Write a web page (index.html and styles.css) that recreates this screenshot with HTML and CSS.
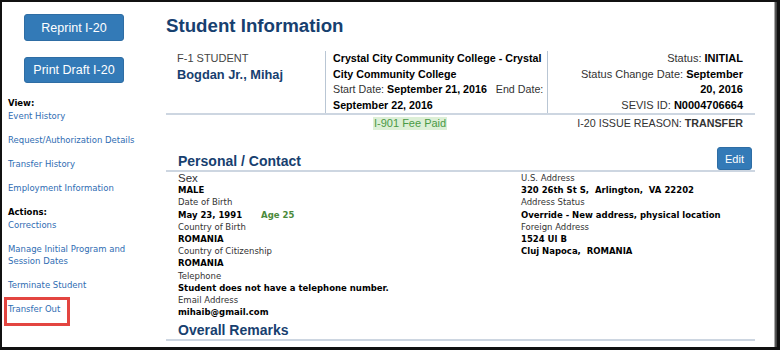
FILE: index.html
```html
<!DOCTYPE html>
<html>
<head>
<meta charset="utf-8">
<link rel="stylesheet" href="styles.css">
</head>
<body>
<div class="frame">
  <aside class="sidebar">
    <button class="btn btn-side">Reprint I-20</button>
    <button class="btn btn-side">Print Draft I-20</button>
    <div class="side-label">View:</div>
    <a class="side-link">Event History</a>
    <a class="side-link">Request/Authorization Details</a>
    <a class="side-link">Transfer History</a>
    <a class="side-link">Employment Information</a>
    <div class="side-label">Actions:</div>
    <a class="side-link">Corrections</a>
    <a class="side-link">Manage Initial Program and<br>Session Dates</a>
    <a class="side-link">Terminate Student</a>
    <a class="side-link highlighted">Transfer Out</a>
  </aside>
  <main class="main">
    <h1 class="title">Student Information</h1>
    <div class="info">
      <div class="info-col col-a">
        <div class="type">F-1 STUDENT</div>
        <div class="name">Bogdan Jr., Mihaj</div>
      </div>
      <div class="info-col col-b">
        <div><b>Crystal City Community College - Crystal City Community College</b></div>
        <div>Start Date: <b>September 21, 2016</b>&nbsp;&nbsp; End Date: <b>September 22, 2016</b></div>
      </div>
      <div class="info-col col-c">
        <div>Status: <b>INITIAL</b></div>
        <div>Status Change Date: <b>September 20, 2016</b></div>
        <div>SEVIS ID: <b>N0004706664</b></div>
      </div>
    </div>
    <div class="info-foot">
      <span class="fee">I-901 Fee Paid</span>
      <span class="reason">I-20 ISSUE REASON: <b>TRANSFER</b></span>
    </div>
    <div class="section-head">
      <h2 class="section-title">Personal / Contact</h2>
      <button class="btn btn-edit">Edit</button>
    </div>
    <div class="details">
      <div class="det-col">
        <div class="lbl lbl-big">Sex</div>
        <div class="val">MALE</div>
        <div class="lbl">Date of Birth</div>
        <div class="val">May 23, 1991 <span class="age">Age 25</span></div>
        <div class="lbl">Country of Birth</div>
        <div class="val">ROMANIA</div>
        <div class="lbl">Country of Citizenship</div>
        <div class="val">ROMANIA</div>
        <div class="lbl">Telephone</div>
        <div class="val">Student does not have a telephone number.</div>
        <div class="lbl">Email Address</div>
        <div class="val">mihaib@gmail.com</div>
      </div>
      <div class="det-col det-right">
        <div class="lbl">U.S. Address</div>
        <div class="val">320 26th St S,&nbsp; Arlington,&nbsp; VA 22202</div>
        <div class="lbl">Address Status</div>
        <div class="val">Override - New address, physical location</div>
        <div class="lbl">Foreign Address</div>
        <div class="val">1524 Ul B</div>
        <div class="val">Cluj Napoca,&nbsp; ROMANIA</div>
      </div>
    </div>
    <div class="section-head remarks">
      <h2 class="section-title">Overall Remarks</h2>
    </div>
  </main>
</div>
</body>
</html>
```
FILE: styles.css
```css
html, body {
  margin: 0;
  padding: 0;
  background: #fff;
}
.frame {
  width: 780px;
  height: 350px;
  box-sizing: border-box;
  border-top: 2px solid #111;
  border-left: 2px solid #111;
  border-bottom: 3px solid #111;
  border-right: 3px solid #111;
  box-shadow: inset -1px 0 0 #444, inset -2px 0 0 #555, inset -3px 0 0 #aaa;
  display: flex;
  overflow: hidden;
  font-family: "Liberation Sans", Arial, sans-serif;
  color: #000;
}
.sidebar {
  width: 150px;
  flex: none;
  display: flex;
  flex-direction: column;
  align-items: flex-start;
  padding-top: 12px;
  box-sizing: border-box;
}
.btn {
  font-family: "Liberation Sans", Arial, sans-serif;
  background: #337ab7;
  color: #fff;
  border: 1px solid #2e6da4;
  border-radius: 3px;
  padding: 0;
  cursor: pointer;
}
.btn-side {
  width: 100px;
  height: 27px;
  margin-left: 22px;
  font-size: 12.5px;
  margin-bottom: 16px;
}
.btn-side + .btn-side {
  height: 26px;
  margin-bottom: 14px;
}
.side-label {
  margin-left: 6px;
  font-family: "DejaVu Sans", Verdana, sans-serif;
  font-size: 8.5px;
  font-weight: bold;
  line-height: 13px;
}
.side-link {
  margin-left: 6px;
  font-family: "DejaVu Sans", Verdana, sans-serif;
  font-size: 8.5px;
  line-height: 12px;
  margin-bottom: 12px;
  color: #2f6db3;
  position: relative;
}
.highlighted::after {
  content: "";
  position: absolute;
  left: -4px;
  top: -6px;
  width: 60px;
  height: 23px;
  border: 3px solid #e34540;
}
.main {
  flex: 1;
  padding: 12px 22px 0 14px;
  min-width: 0;
}
.title {
  margin: 0 0 13px;
  font-size: 18.7px;
  line-height: 24px;
  font-weight: bold;
  color: #17406f;
}
.info {
  display: grid;
  grid-template-columns: 160px 222px 1fr;
  border-bottom: 2px solid #cdd6e1;
  font-size: 11px;
  line-height: 15.5px;
}
.info-col {
  height: 62px;
}
.col-a {
  padding-left: 11px;
  border-right: 1px solid #b9c6d4;
}
.col-a .type {
  color: #444;
  line-height: 15px;
}
.col-a .name {
  font-size: 12.8px;
  font-weight: bold;
  color: #17406f;
  line-height: 17px;
}
.col-b {
  padding: 0 0 0 7px;
  border-right: 1px solid #b9c6d4;
  color: #333;
  font-size: 10.7px;
}
.col-b b, .col-c b {
  color: #000;
}
.col-c {
  text-align: right;
  padding: 0 12px 0 30px;
  color: #333;
}
.info-foot {
  display: flex;
  align-items: center;
  height: 16px;
  font-size: 10.7px;
  color: #333;
}
.fee {
  margin-left: 207px;
  background: #dcefd6;
  color: #4a9a45;
  padding: 0 1px;
  line-height: 13px;
  font-size: 11px;
}
.reason {
  margin-left: auto;
  margin-right: 12px;
}
.section-head {
  display: flex;
  align-items: flex-end;
  justify-content: space-between;
  margin-top: 16px;
  padding: 0 3px 0 12px;
  border-bottom: 2px solid #cdd6e1;
}
.section-title {
  margin: 0;
  font-size: 14px;
  line-height: 17px;
  color: #17406f;
  font-weight: bold;
}
.btn-edit {
  width: 35px;
  height: 23px;
  font-size: 11px;
}
.details {
  display: flex;
  padding-left: 12px;
  font-family: "DejaVu Sans", Verdana, sans-serif;
  font-size: 8.5px;
  line-height: 12.2px;
}
.det-col {
  width: 343px;
}
.det-right {
  width: auto;
}
.lbl {
  color: #333;
}
.lbl-big {
  font-family: "Liberation Sans", Arial, sans-serif;
  font-size: 11.5px;
  color: #333;
}
.val {
  font-weight: bold;
  color: #000;
}
.age {
  color: #4a8a3a;
  margin-left: 16px;
}
.remarks {
  margin-top: 4px;
}
```
